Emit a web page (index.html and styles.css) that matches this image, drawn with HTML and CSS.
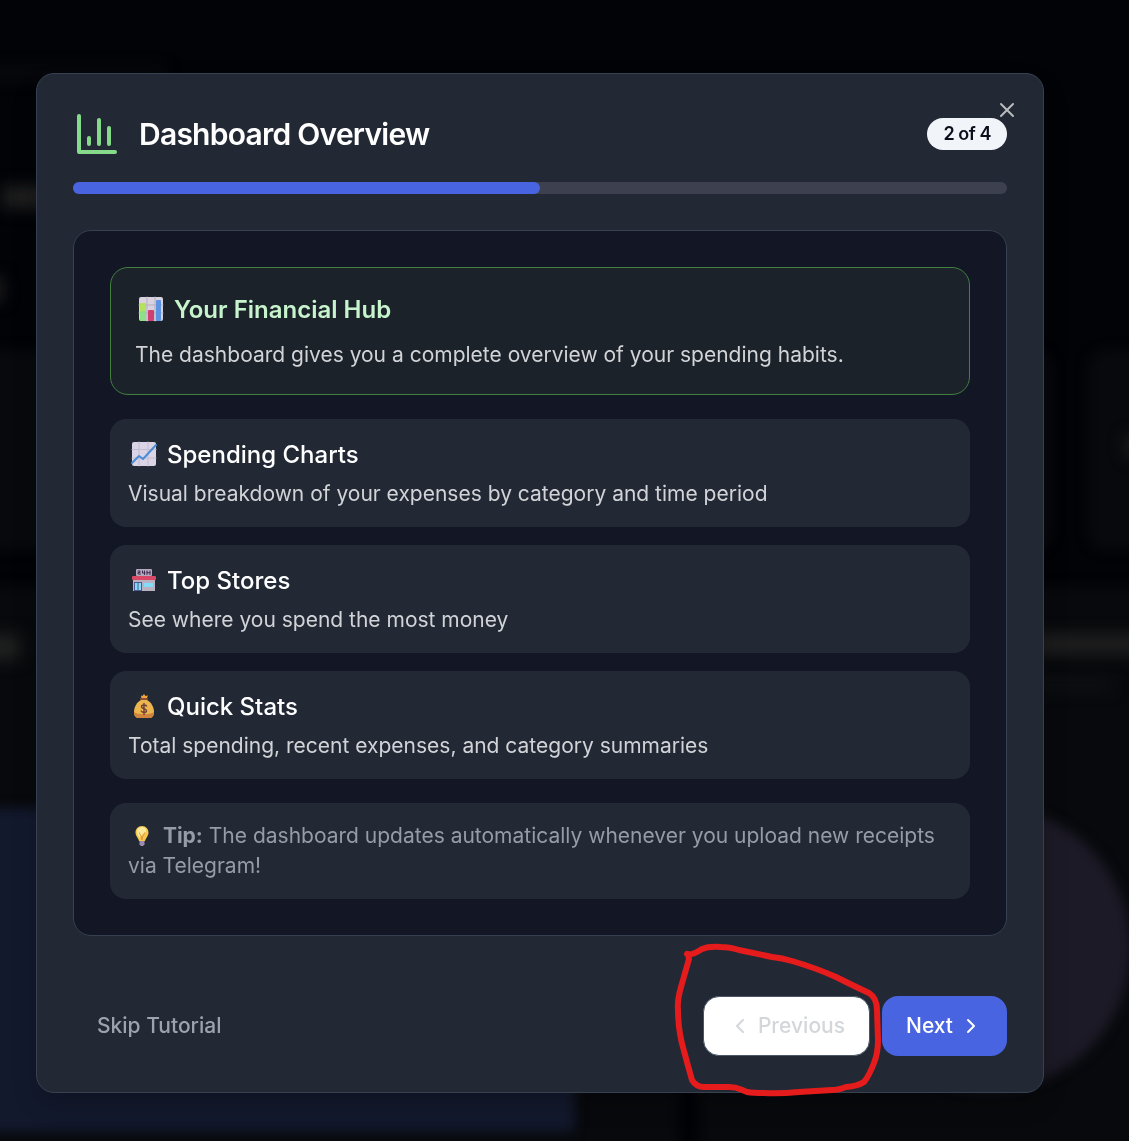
FILE: index.html
```html
<!DOCTYPE html>
<html lang="en">
<head>
<meta charset="utf-8">
<meta name="viewport" content="width=device-width, initial-scale=1">
<title>Dashboard Overview</title>
<link rel="stylesheet" href="styles.css">
</head>
<body>
<div class="backdrop" aria-hidden="true">
  <div class="shade stat-left"></div>
  <div class="shade stat-right"></div>
  <div class="shade panel-left"></div>
  <div class="shade panel-right"></div>
  <div class="shade treemap"></div>
  <div class="shade pie"></div>
  <div class="shade smudge smudge-subtitle"></div>
  <div class="shade smudge smudge-heading"></div>
  <div class="shade smudge smudge-figure"></div>
  <div class="shade smudge smudge-spending"></div>
  <div class="shade smudge smudge-breakdown"></div>
  <div class="shade smudge smudge-caption"></div>
  <div class="shade smudge smudge-stat"></div>
</div>

<main class="stage">
  <section class="modal" role="dialog" aria-modal="true" aria-labelledby="title">
    <button class="close" type="button" aria-label="Close">
      <svg width="24" height="24" viewBox="0 0 24 24"><path d="M18 6 6 18M6 6l12 12"/></svg>
    </button>

    <header class="header">
      <svg class="header-icon" width="48" height="48" viewBox="0 0 24 24"><path d="M3 3v18h18M18 17V9M13 17V5M8 17v-3"/></svg>
      <h1 class="title" id="title">Dashboard Overview</h1>
      <span class="badge">2 of 4</span>
    </header>

    <div class="progress" role="progressbar" aria-label="Tutorial progress" aria-valuemin="0" aria-valuemax="4" aria-valuenow="2">
      <div class="progress-fill" style="width: 50%"></div>
    </div>

    <div class="content">
      <article class="hero">
        <h2 class="hero-title">
          <svg class="emoji" width="26" height="26" viewBox="0 1 26 26">
            <rect x="1" y="1" width="24" height="24" rx="2" fill="#d8d2e0"/>
            <path d="M1 9h24M1 17h24M9 1v24M17 1v24" stroke="#b3adbd" stroke-width="1"/>
            <rect x="2" y="7" width="6" height="18" rx="1" fill="#b4e25c"/>
            <rect x="2" y="15" width="6" height="10" rx="1" fill="#8edf88"/>
            <rect x="10" y="14" width="6" height="11" rx="1" fill="#cf3f70"/>
            <rect x="18" y="4" width="5" height="21" rx="1" fill="#5c93e2"/>
          </svg>
          Your Financial Hub
        </h2>
        <p class="text">The dashboard gives you a complete overview of your spending habits.</p>
      </article>

      <div class="features">
        <article class="card">
          <h2 class="card-title">
            <svg class="emoji" width="26" height="26" viewBox="0 1 26 26">
              <rect x="1" y="1" width="24" height="24" rx="2" fill="#dad4e6"/>
              <path d="M1 8.500h24M1 17h24M8 1v24M17 1v24" stroke="#c3bcd0" stroke-width="1"/>
              <path d="M1 22 8 15l4 3L25 4" fill="none" stroke="#4c8cd6" stroke-width="2"/>
            </svg>
            Spending Charts
          </h2>
          <p class="text">Visual breakdown of your expenses by category and time period</p>
        </article>
        <article class="card">
          <h2 class="card-title">
            <svg class="emoji" width="26" height="26" viewBox="0 1 26 26">
              <rect x="5" y="2" width="16" height="7" rx="1" fill="#b3a8bd"/>
              <path d="M7 4h2v1.500H7V7h2.500M11.500 4v2H14M13.500 4v3.500M16 4v3.500M19 4v3.500M16 5.700h3" fill="none" stroke="#3e2c50" stroke-width="1"/>
              <rect x="2" y="12" width="22" height="12" fill="#b9b0c0"/>
              <rect x="1" y="9" width="24" height="4" rx="1" fill="#d94867"/>
              <rect x="3" y="15" width="8" height="9" fill="#4d5796"/>
              <path d="M4 16h2.500v7H4zM7.500 16H10v7H7.500zM13 16h9v4h-9z" fill="#86dcf8"/>
            </svg>
            Top Stores
          </h2>
          <p class="text">See where you spend the most money</p>
        </article>
        <article class="card">
          <h2 class="card-title">
            <svg class="emoji" width="26" height="26" viewBox="0 1 26 26">
              <path d="M10 2.500 11.500 3 13 1l1.500 2L17 2.500 15.500 6h-5z" fill="#f0a83d"/>
              <path d="M10 7C6 9 3 14 3 19c0 4 2 6 5 6h10c3 0 5-2 5-6 0-5-3-10-7-12z" fill="#edb54e"/>
              <path d="M3 19c0 4 2 6 5 6h10c3 0 5-2 5-6-4 3-16 3-20 0z" fill="#d1843d"/>
              <rect x="9" y="5" width="8" height="2" rx="1" fill="#8c4f35"/>
              <path d="M15.500 13c-1-1.500-5-1.500-5 .8 0 2.500 5 1.500 5 4 0 2.200-4 2.200-5.200.4M13 10.500v11" fill="none" stroke="#70443a" stroke-width="1.500"/>
            </svg>
            Quick Stats
          </h2>
          <p class="text">Total spending, recent expenses, and category summaries</p>
        </article>
      </div>

      <p class="tip">
        <svg class="tip-icon" width="22" height="22" viewBox="0 0 22 22">
          <path d="M11 1C7 1 4.500 4 4.500 7.500c0 3.500 2.500 5 3.500 8.500h6c1-3.500 3.500-5 3.500-8.500C17.500 4 15 1 11 1z" fill="#f6c64e"/>
          <path d="M11 2C7.500 2 6 4.500 6 7s2 4.500 2.500 6c2-4 6-5 7-7.500C15 3 13.500 2 11 2z" fill="#fae99a"/>
          <path d="M8.500 8c0 2 2 1.500 2.500 7 .5-5.500 2.500-5 2.500-7" fill="none" stroke="#dc9437"/>
          <path d="M8.500 16h5v3.500L12 21h-2l-1.500-1.500z" fill="#9b8bb0"/>
        </svg>
        <strong>Tip:</strong> The dashboard updates automatically whenever you upload new receipts via Telegram!
      </p>
    </div>

    <footer class="footer">
      <button class="button skip" type="button">Skip Tutorial</button>
      <div class="pager">
        <div class="marked">
          <button class="button previous" type="button">
            <svg width="24" height="24" viewBox="0 0 24 24"><path d="m15 18-6-6 6-6"/></svg>
            Previous
          </button>
          <svg class="scribble" width="216" height="168" viewBox="0 0 216 168" aria-hidden="true">
            <path d="M16 18Q20 20 31 13Q38 10 50 11Q58 11 68 14L101 21Q111 22 121 25Q145 32 165 41Q183 50 198 57Q206 62 206 74L207 104Q207 117 203 127Q198 140 193 146Q187 150 175 151Q167 154 161 154Q144 155 128 156Q108 158 93 157Q82 157 76 156C68 153 67 151 58 151L33 151Q25 151 21 144Q17 130 13 115Q7 95 7 74Q6 65 10 51L18 23L17 18"/>
          </svg>
        </div>
        <button class="button next" type="button">
          Next
          <svg width="24" height="24" viewBox="0 0 24 24"><path d="m9 18 6-6-6-6"/></svg>
        </button>
      </div>
    </footer>
  </section>
</main>
</body>
</html>
```
FILE: styles.css
```css
* {
  box-sizing: border-box;
}

body {
  margin: 0;
  min-height: 100vh;
  background: #020307;
  color: #ffffff;
  font-family: Inter, "Liberation Sans", sans-serif;
}

h1,
h2,
p {
  margin: 0;
}

button {
  font-family: inherit;
  cursor: pointer;
}

svg path {
  stroke-linecap: round;
  stroke-linejoin: round;
}

/* Blurred dashboard behind the dialog */
.backdrop {
  position: fixed;
  inset: 0;
  overflow: hidden;
}

.shade {
  position: absolute;
  filter: blur(6px);
  background: #07090c;
}

.stat-left {
  left: -40px;
  top: 350px;
  width: 1092px;
  height: 200px;
  border-radius: 18px;
}

.stat-right {
  left: 1088px;
  top: 350px;
  width: 300px;
  height: 200px;
  border-radius: 18px;
}

.panel-left {
  left: -40px;
  top: 586px;
  width: 718px;
  height: 700px;
}

.panel-right {
  left: 700px;
  top: 586px;
  width: 700px;
  height: 700px;
}

.treemap {
  left: -40px;
  top: 808px;
  width: 615px;
  height: 324px;
  background: #13192d;
}

.pie {
  left: 847px;
  top: 806px;
  width: 284px;
  height: 284px;
  border-radius: 50%;
  background: #1d1a27;
}

.smudge {
  filter: blur(8px);
  background: #202020;
}

.smudge-subtitle {
  left: -20px;
  top: 68px;
  width: 185px;
  height: 10px;
  background: #0b0c0e;
}

.smudge-heading {
  left: 2px;
  top: 186px;
  width: 60px;
  height: 22px;
}

.smudge-figure {
  left: -16px;
  top: 277px;
  width: 18px;
  height: 24px;
}

.smudge-spending {
  left: -20px;
  top: 634px;
  width: 40px;
  height: 26px;
}

.smudge-breakdown {
  left: 1000px;
  top: 634px;
  width: 150px;
  height: 20px;
}

.smudge-caption {
  left: 1000px;
  top: 680px;
  width: 112px;
  height: 10px;
  background: #111214;
}

.smudge-stat {
  left: 1126px;
  top: 436px;
  width: 30px;
  height: 20px;
}

/* Dialog */
.stage {
  position: relative;
  padding: 73px 85px 48px 36px;
}

.modal {
  position: relative;
  padding: 36px;
  border: 1px solid #374151;
  border-radius: 18px;
  background: #222935;
  box-shadow: 0 12px 24px rgba(0, 0, 0, 0.2);
}

.close {
  position: absolute;
  top: 24px;
  right: 24px;
  display: flex;
  padding: 0;
  border: 0;
  background: none;
  z-index: 1;
}

.close svg,
.header-icon,
.button svg {
  fill: none;
  stroke: currentColor;
  stroke-width: 2;
}

.close svg {
  color: #b9bbbe;
}

.header {
  display: flex;
  align-items: center;
  gap: 18px;
  letter-spacing: -0.025em;
}

.header-icon {
  flex: none;
  color: #86db8a;
}

.title {
  flex: 1;
  font-size: 30px;
  line-height: 36px;
  font-weight: 600;
  letter-spacing: -0.025em;
}

.badge {
  padding: 4px 16px;
  border-radius: 16px;
  background: #f1f5f9;
  color: #0b0f1c;
  font-size: 18px;
  line-height: 24px;
  font-weight: 600;
  letter-spacing: -0.025em;
}

.progress {
  height: 12px;
  margin-top: 24px;
  overflow: hidden;
  border-radius: 6px;
  background: #3c404f;
}

.progress-fill {
  height: 100%;
  border-radius: 0 6px 6px 0;
  background: #4864e1;
}

.content {
  display: flex;
  flex-direction: column;
  gap: 24px;
  margin-top: 36px;
  padding: 36px;
  border: 1px solid #374151;
  border-radius: 18px;
  background: #131624;
}

.hero {
  display: flex;
  flex-direction: column;
  gap: 12px;
  padding: 24px;
  border: 1px solid #41803f;
  border-radius: 18px;
  background: #1b2229;
}

.hero-title,
.card-title {
  display: flex;
  align-items: center;
  gap: 10px;
  padding-left: 3px;
  font-size: 24px;
  line-height: 36px;
}

.hero-title {
  color: #c7f3cd;
  font-weight: 600;
}

.card-title {
  font-weight: 500;
}

.emoji {
  flex: none;
  overflow: visible;
}

.features {
  display: flex;
  flex-direction: column;
  gap: 18px;
}

.card {
  display: flex;
  flex-direction: column;
  gap: 6px;
  padding: 18px;
  border-radius: 16px;
  background: #222935;
}

.text {
  color: #d1d3d7;
  font-size: 21px;
  line-height: 30px;
}

.tip {
  padding: 18px;
  border-radius: 16px;
  background: #222935;
  color: #969ba7;
  font-size: 21px;
  line-height: 30px;
}

.tip-icon {
  margin: 0 4px 0 3px;
  vertical-align: -4px;
}

.footer {
  display: flex;
  align-items: center;
  justify-content: space-between;
  margin-top: 60px;
}

.pager {
  display: flex;
  gap: 12px;
}

.button {
  display: flex;
  align-items: center;
  height: 60px;
  padding: 0 24px;
  border: 0;
  border-radius: 16px;
  font-size: 21px;
  line-height: 30px;
  font-weight: 500;
}

.skip {
  background: none;
  color: #9ca3af;
}

.marked {
  position: relative;
}

.previous {
  gap: 6px;
  border: 1px solid #4b5563;
  background: #ffffff;
  color: #d3d6db;
}

.next {
  gap: 6px;
  background: #4864e1;
  color: #ffffff;
}

/* Hand-drawn circle over the Previous button */
.scribble {
  position: absolute;
  left: -32px;
  top: -60px;
  z-index: 1;
  fill: none;
  stroke: #e61c1c;
  stroke-width: 6;
  pointer-events: none;
}
```
